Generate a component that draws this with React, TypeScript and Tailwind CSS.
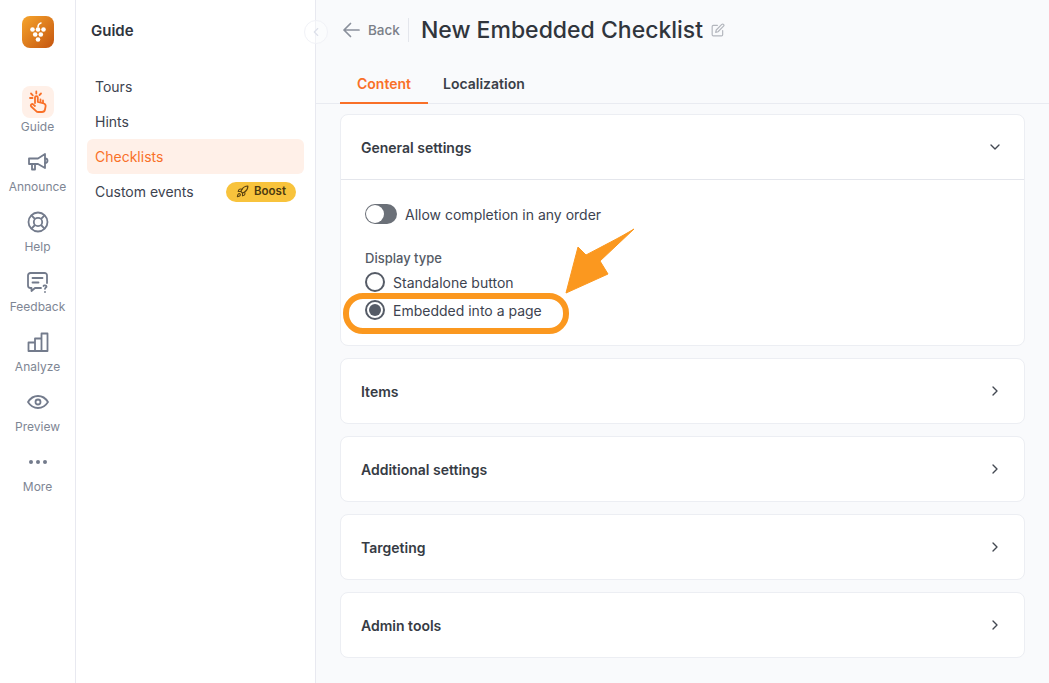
import { ChevronDown, ChevronLeft, ChevronRight } from "lucide-react";
import type { ReactNode } from "react";

const font = "font-['Inter','Noto_Sans',sans-serif]";

const Logo = () => (
  <div className="flex h-8 w-8 items-center justify-center rounded-lg bg-gradient-to-br from-[#f6a52c] to-[#c4540f]">
    <svg width="22" height="24" viewBox="0 0 22 24" fill="#fff">
      <path d="M11 7c0-2 1-3.500 3-4" fill="none" stroke="#fff" strokeWidth="1.500" strokeLinecap="round" />
      <circle cx="5.500" cy="9.500" r="2.300" />
      <circle cx="11" cy="9.500" r="2.300" />
      <circle cx="16.500" cy="9.500" r="2.300" />
      <circle cx="8.200" cy="14.500" r="2.300" />
      <circle cx="13.800" cy="14.500" r="2.300" />
      <circle cx="11" cy="19.500" r="2.300" />
    </svg>
  </div>
);

const GuideIcon = () => (
  <svg width="24" height="24" viewBox="0 0 24 24" fill="none" stroke="#f97028" strokeWidth="1.800" strokeLinecap="round" strokeLinejoin="round">
    <path d="M9 13V7.500a1.400 1.400 0 0 1 2.800 0V12l6 1.500c1.300.4 2 1.500 1.800 2.800l-.6 3.200c-.3 1.500-1.500 2.500-3 2.500h-3.500c-1 0-1.900-.4-2.600-1.200L5.200 16.500c-.6-.7-.5-1.600.1-2.100.6-.5 1.500-.4 2.100.2L9 16" />
    <path d="M14.500 12V9.500M17 13V10.500" />
    <path d="M4 8h2.500M5 3.500l1.800 1.800M10.300 1.500v2M15 3.500l-1.500 1.500" />
  </svg>
);

const AnnounceIcon = () => (
  <svg width="24" height="24" viewBox="0 0 24 24" fill="none" stroke="#737b8c" strokeWidth="1.800" strokeLinecap="round" strokeLinejoin="round">
    <path d="M3 8.500h9L19 4v14l-7-4H3z" />
    <path d="M19 8.500c1.500 0 2.500 1 2.500 2.300S20.500 13 19 13" />
    <path d="M6 14v5.500h3V14" />
  </svg>
);

const HelpIcon = () => (
  <svg width="24" height="24" viewBox="0 0 24 24" fill="none" stroke="#737b8c" strokeWidth="1.800">
    <circle cx="12" cy="12" r="9.500" />
    <circle cx="12" cy="12" r="4.200" />
    <path d="M5.200 5.200l3.800 3.800M18.800 5.200L15 9M5.200 18.800L9 15M18.800 18.800L15 15" />
  </svg>
);

const FeedbackIcon = () => (
  <svg width="24" height="24" viewBox="0 0 24 24" fill="none" stroke="#737b8c" strokeWidth="1.800" strokeLinecap="round" strokeLinejoin="round">
    <path d="M15 18H9l-3.500 3v-3H4.500A2.500 2.500 0 0 1 2 15.500v-10A2.500 2.500 0 0 1 4.500 3h14A2.500 2.500 0 0 1 21 5.500V13" />
    <path d="M6.500 8h10M6.500 12.500h6" />
    <path d="M17.500 16c.3-1 2.800-1 3 .5.100 1-1.300 1.200-1.500 2.300M19 22v.1" />
  </svg>
);

const AnalyzeIcon = () => (
  <svg width="24" height="24" viewBox="0 0 24 24" fill="none" stroke="#737b8c" strokeWidth="1.800" strokeLinejoin="round">
    <path d="M2.500 12.500h6.500v8.500H2.500zM9 8.500h6.500V21H9zM15.500 3.500h6V21h-6z" />
  </svg>
);

const PreviewIcon = () => (
  <svg width="24" height="24" viewBox="0 0 24 24" fill="none" stroke="#737b8c" strokeWidth="1.800" strokeLinejoin="round">
    <path d="M2 12c2.500-4 5.800-6 10-6s7.500 2 10 6c-2.500 4-5.800 6-10 6s-7.500-2-10-6z" />
    <circle cx="12" cy="12" r="2.500" />
  </svg>
);

const MoreIcon = () => (
  <svg width="24" height="24" viewBox="0 0 24 24" fill="#737b8c">
    <circle cx="5" cy="12" r="2" />
    <circle cx="12" cy="12" r="2" />
    <circle cx="19" cy="12" r="2" />
  </svg>
);

const RailItem = ({ icon, label, active }: { icon: ReactNode; label: string; active?: boolean }) => (
  <div className="flex h-[60px] flex-col items-center">
    <div className={`flex h-8 w-8 items-center justify-center rounded-lg ${active ? "bg-[#fff0e8]" : ""}`}>{icon}</div>
    <span className="mt-[1px] text-[12px] leading-[16px] text-[#7e8694]">{label}</span>
  </div>
);

const Rail = () => (
  <aside className="flex w-[76px] shrink-0 flex-col items-center border-r border-[#e8e9f0] bg-white pt-[16px]">
    <Logo />
    <div className="mt-[38px] w-full">
      <RailItem active icon={<GuideIcon />} label="Guide" />
      <RailItem icon={<AnnounceIcon />} label="Announce" />
      <RailItem icon={<HelpIcon />} label="Help" />
      <RailItem icon={<FeedbackIcon />} label="Feedback" />
      <RailItem icon={<AnalyzeIcon />} label="Analyze" />
      <RailItem icon={<PreviewIcon />} label="Preview" />
      <RailItem icon={<MoreIcon />} label="More" />
    </div>
  </aside>
);

const RocketIcon = () => (
  <svg width="13" height="13" viewBox="0 0 24 24" fill="none" stroke="#5c4310" strokeWidth="2" strokeLinecap="round" strokeLinejoin="round">
    <path d="M4.500 16.500c-1.500 1.260-2 5-2 5s3.740-.5 5-2c.71-.84.700-2.130-.090-2.910a2.180 2.180 0 0 0-2.910-.090z" />
    <path d="m12 15-3-3a22 22 0 0 1 2-3.950A12.880 12.880 0 0 1 22 2c0 2.720-.780 7.500-6 11a22.350 22.350 0 0 1-4 2z" />
    <path d="M9 12H4s.550-3.030 2-4c1.620-1.080 5 0 5 0M12 15v5s3.030-.550 4-2c1.080-1.620 0-5 0-5" />
  </svg>
);

const MenuItem = ({ label, active, children }: { label: string; active?: boolean; children?: ReactNode }) => (
  <div className={`flex h-[35px] items-center justify-between rounded-md pl-2 pr-2 text-[14px] ${active ? "bg-[#fff0e8] text-[#f97028]" : "text-[#3d4350]"}`}>
    <span>{label}</span>
    {children}
  </div>
);

const SidePanel = () => (
  <aside className="relative w-[240px] shrink-0 border-r border-[#e8e9f0] bg-white px-[11px]">
    <h2 className="pl-1 pt-[20px] text-[15px] font-semibold leading-[22px] text-[#2f343d]">Guide</h2>
    <nav className="mt-[27px] flex flex-col">
      <MenuItem label="Tours" />
      <MenuItem label="Hints" />
      <MenuItem active label="Checklists" />
      <MenuItem label="Custom events">
        <span className="flex h-[20px] items-center gap-[5px] rounded-full bg-[#f8c33c] px-[10px] text-[11.500px] font-semibold text-[#4c3a10]">
          <RocketIcon />
          Boost
        </span>
      </MenuItem>
    </nav>
    <div className="absolute right-[-13px] top-[20px] flex h-6 w-6 items-center justify-center rounded-full border border-[#f1f2f7] bg-white/40">
      <ChevronLeft size={14} className="text-[#dde0ea]" />
    </div>
  </aside>
);

const Header = () => (
  <header className="flex h-[60px] items-center pl-[26px]">
    <svg width="18" height="18" viewBox="0 0 18 18" fill="none" stroke="#8a909c" strokeWidth="1.700" strokeLinecap="round" strokeLinejoin="round">
      <path d="M17 9H2M8.500 2.500 2 9l6.500 6.500" />
    </svg>
    <span className="ml-[8px] text-[13.500px] font-medium text-[#7b7f88]">Back</span>
    <span className="ml-[8px] h-[24px] w-px bg-[#e4e6ec]" />
    <h1 className="ml-[12px] text-[23px] font-medium text-[#30353c]">New Embedded Checklist</h1>
    <svg className="ml-[8px]" width="14" height="14" viewBox="0 0 24 24" fill="none" stroke="#b3b6bd" strokeWidth="2" strokeLinecap="round" strokeLinejoin="round">
      <path d="M20 13v7a2 2 0 0 1-2 2H4a2 2 0 0 1-2-2V6a2 2 0 0 1 2-2h7" />
      <path d="M18.500 2.500a2.120 2.120 0 0 1 3 3L12 15l-4 1 1-4z" />
    </svg>
  </header>
);

const Tabs = () => (
  <div className="flex h-[44px] items-end border-b border-[#e9ebf1] pl-[24px] text-[14px] font-semibold">
    <div className="flex h-[44px] w-[88px] items-center justify-center border-b-2 border-[#f97028] pt-[5px] text-[#f97028] mb-[-1px]">Content</div>
    <div className="flex h-[44px] items-center pl-[15px] pt-[5px] text-[#3a3f48]">Localization</div>
  </div>
);

const Section = ({ title }: { title: string }) => (
  <section className="flex h-[66px] items-center justify-between rounded-lg border border-[#eceef3] bg-white pl-[20px] pr-[21px]">
    <span className="text-[14px] font-semibold text-[#363b44]">{title}</span>
    <ChevronRight size={16} className="text-[#434852]" />
  </section>
);

const Radio = ({ checked, label }: { checked?: boolean; label: string }) => (
  <div className="flex h-[28px] items-center gap-[8px]">
    <span className="flex h-[20px] w-[20px] items-center justify-center rounded-full border-2 border-[#555b66] bg-white">
      {checked && <span className="h-[12px] w-[12px] rounded-full bg-[#555b66]" />}
    </span>
    <span className="text-[14px] text-[#3d4350]">{label}</span>
  </div>
);

const GeneralSettings = () => (
  <section className="relative h-[232px] rounded-lg border border-[#eceef3] bg-white">
    <div className="flex h-[65px] items-center justify-between border-b border-[#e4e6ec] pl-[20px] pr-[21px]">
      <span className="text-[14px] font-semibold text-[#363b44]">General settings</span>
      <ChevronDown size={16} className="text-[#434852]" />
    </div>
    <div className="pl-[24px] pt-[24px]">
      <div className="flex h-[20px] items-center gap-[8px]">
        <span className="flex h-[20px] w-[32px] items-center rounded-full bg-[#6b7078] pl-[1px]">
          <span className="h-[18px] w-[18px] rounded-full bg-white" />
        </span>
        <span className="text-[14px] text-[#3d4350]">Allow completion in any order</span>
      </div>
      <div className="mt-[25px] text-[13px] font-medium leading-[18px] text-[#555b66]">Display type</div>
      <div className="mt-[1px]">
        <Radio label="Standalone button" />
        <Radio checked label="Embedded into a page" />
      </div>
    </div>
    {/* annotation drawn over the card */}
    <div className="absolute left-[2px] top-[178px] h-[41px] w-[226px] rounded-[20px] border-[6px] border-[#fb981f]" />
    <svg className="absolute left-[220px] top-[110px]" width="80" height="72" viewBox="0 0 80 72" fill="#fb981f">
      <path d="M73 4 39 36 47 49 5 68 17 22 25 30 C 40 22 60 12 73 4z" strokeLinejoin="round" stroke="#fb981f" strokeWidth="1" />
    </svg>
  </section>
);

export default function App() {
  return (
    <div className={`flex h-[683px] w-[1049px] overflow-hidden bg-[#f9fafc] ${font}`}>
      <Rail />
      <SidePanel />
      <main className="min-w-0 flex-1">
        <Header />
        <Tabs />
        <div className="flex flex-col gap-[12px] pl-[24px] pr-[24px] pt-[10px]">
          <GeneralSettings />
          <Section title="Items" />
          <Section title="Additional settings" />
          <Section title="Targeting" />
          <Section title="Admin tools" />
        </div>
      </main>
    </div>
  );
}
